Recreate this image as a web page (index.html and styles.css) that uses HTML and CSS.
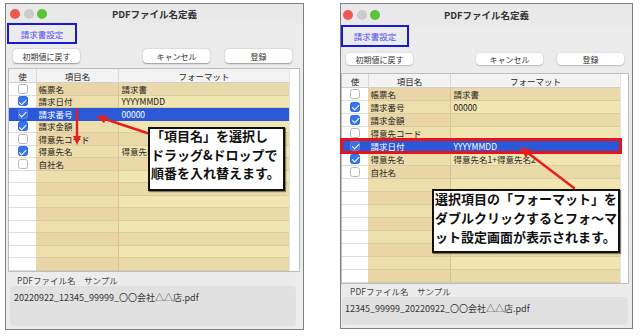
FILE: index.html
```html
<!DOCTYPE html>
<html lang="ja">
<head>
<meta charset="utf-8">
<title>PDFファイル名定義</title>
<link rel="stylesheet" href="styles.css">
</head>
<body>
<div class="stage">
  <div class="win win-a">
    <div class="titlebar">
      <div class="lights"><span class="dot red"></span><span class="dot gray"></span><span class="dot green"></span></div>
      <div class="title">PDFファイル名定義</div>
      <div></div>
    </div>
    <div class="tab">請求書設定</div>
    <div class="btnrow">
      <div class="btn">初期値に戻す</div>
      <div class="btngroup"><div class="btn">キャンセル</div><div class="btn">登録</div></div>
    </div>
    <div class="table">
      <div class="grid">
        <div class="row head"><div class="c use">使</div><div class="c name">項目名</div><div class="c fmt">フォーマット</div></div>
        <div class="row d"><div class="c use"><span class="cb"></span></div><div class="c name">帳票名</div><div class="c fmt">請求書</div></div>
        <div class="row d"><div class="c use"><span class="cb on"></span></div><div class="c name">請求日付</div><div class="c fmt">YYYYMMDD</div></div>
        <div class="row d sel"><div class="c use"><span class="cb on"></span></div><div class="c name">請求番号</div><div class="c fmt">00000</div></div>
        <div class="row d"><div class="c use"><span class="cb on"></span></div><div class="c name">請求金額</div><div class="c fmt"></div></div>
        <div class="row d"><div class="c use"><span class="cb"></span></div><div class="c name">得意先コード</div><div class="c fmt"></div></div>
        <div class="row d"><div class="c use"><span class="cb on"></span></div><div class="c name">得意先名</div><div class="c fmt">得意先名1+得意先名2</div></div>
        <div class="row d"><div class="c use"><span class="cb"></span></div><div class="c name">自社名</div><div class="c fmt"></div></div>
        <div class="row d"><div class="c use"></div><div class="c name"></div><div class="c fmt"></div></div>
        <div class="row d"><div class="c use"></div><div class="c name"></div><div class="c fmt"></div></div>
        <div class="row d"><div class="c use"></div><div class="c name"></div><div class="c fmt"></div></div>
        <div class="row d"><div class="c use"></div><div class="c name"></div><div class="c fmt"></div></div>
        <div class="row d"><div class="c use"></div><div class="c name"></div><div class="c fmt"></div></div>
        <div class="row d"><div class="c use"></div><div class="c name"></div><div class="c fmt"></div></div>
        <div class="row d"><div class="c use"></div><div class="c name"></div><div class="c fmt"></div></div>
        <div class="row d"><div class="c use"></div><div class="c name"></div><div class="c fmt"></div></div>
      </div>
      <div class="gutter"></div>
    </div>
    <div class="label">PDFファイル名　サンプル</div>
    <div class="sample">20220922_12345_99999_〇〇会社△△店.pdf</div>
  </div>

  <div class="win win-b">
    <div class="titlebar">
      <div class="lights"><span class="dot red"></span><span class="dot gray"></span><span class="dot green"></span></div>
      <div class="title">PDFファイル名定義</div>
      <div></div>
    </div>
    <div class="tab">請求書設定</div>
    <div class="btnrow">
      <div class="btn">初期値に戻す</div>
      <div class="btngroup"><div class="btn">キャンセル</div><div class="btn">登録</div></div>
    </div>
    <div class="table">
      <div class="grid">
        <div class="row head"><div class="c use">使</div><div class="c name">項目名</div><div class="c fmt">フォーマット</div></div>
        <div class="row d"><div class="c use"><span class="cb"></span></div><div class="c name">帳票名</div><div class="c fmt">請求書</div></div>
        <div class="row d"><div class="c use"><span class="cb on"></span></div><div class="c name">請求番号</div><div class="c fmt">00000</div></div>
        <div class="row d"><div class="c use"><span class="cb on"></span></div><div class="c name">請求金額</div><div class="c fmt"></div></div>
        <div class="row d"><div class="c use"><span class="cb"></span></div><div class="c name">得意先コード</div><div class="c fmt"></div></div>
        <div class="row d sel"><div class="c use"><span class="cb on"></span></div><div class="c name">請求日付</div><div class="c fmt">YYYYMMDD</div></div>
        <div class="row d"><div class="c use"><span class="cb on"></span></div><div class="c name">得意先名</div><div class="c fmt">得意先名1+得意先名2</div></div>
        <div class="row d"><div class="c use"><span class="cb"></span></div><div class="c name">自社名</div><div class="c fmt"></div></div>
        <div class="row d"><div class="c use"></div><div class="c name"></div><div class="c fmt"></div></div>
        <div class="row d"><div class="c use"></div><div class="c name"></div><div class="c fmt"></div></div>
        <div class="row d"><div class="c use"></div><div class="c name"></div><div class="c fmt"></div></div>
        <div class="row d"><div class="c use"></div><div class="c name"></div><div class="c fmt"></div></div>
        <div class="row d"><div class="c use"></div><div class="c name"></div><div class="c fmt"></div></div>
        <div class="row d"><div class="c use"></div><div class="c name"></div><div class="c fmt"></div></div>
        <div class="row d"><div class="c use"></div><div class="c name"></div><div class="c fmt"></div></div>
        <div class="row d"><div class="c use"></div><div class="c name"></div><div class="c fmt"></div></div>
      </div>
      <div class="gutter"></div>
    </div>
    <div class="label">PDFファイル名　サンプル</div>
    <div class="sample">12345_99999_20220922_〇〇会社△△店.pdf</div>
  </div>

  <div class="redbox"></div>
  <svg class="arrows" width="640" height="336" viewBox="0 0 640 336">
    <g stroke="#e61e1e" stroke-width="2.4" fill="none" stroke-linecap="round">
      <line x1="77" y1="110" x2="77" y2="137"/>
      <line x1="147" y1="133" x2="105" y2="119"/>
      <line x1="574" y1="188" x2="528" y2="153"/>
    </g>
    <g fill="#e61e1e">
      <polygon points="73,136 81,136 77,145"/>
      <polygon points="96,116 104.2,123.3 106.8,115.3"/>
      <polygon points="520,147 525.6,157.6 531.6,150"/>
    </g>
  </svg>
  <div class="callout callout-a"><p class="ctext">「項目名」を選択し<br>ドラッグ&amp;ドロップで<br>順番を入れ替えます。</p></div>
  <div class="callout callout-b"><p class="ctext">選択項目の「フォーマット」を<br>ダブルクリックするとフォ〜マ<br>ット設定画面が表示されます。</p></div>
</div>
</body>
</html>
```

FILE: styles.css
```css
body {
  margin: 0;
  background: #fff;
  font-family: "Noto Sans CJK JP", "Noto Sans", sans-serif;
}

.stage {
  position: relative;
  width: 640px;
  height: 336px;
  box-sizing: border-box;
  padding: 3px 0 0 5px;
  display: flex;
  align-items: flex-start;
  gap: 36px;
}

.win {
  box-sizing: border-box;
  border: 1px solid #7f7f7f;
  background: #ececec;
  display: flex;
  flex-direction: column;
}

.win-a {
  width: 299px;
  height: 327px;
  --rh: 12.5px;
  --cu: 27px;
}

.win-b {
  width: 293px;
  height: 326px;
  --rh: 13px;
  --cu: 26px;
}

/* title bar */
.titlebar {
  display: grid;
  grid-template-columns: 1fr auto 1fr;
  align-items: center;
  background: #e9e9e9;
}
.win-a .titlebar { height: 19px; }
.win-b .titlebar { height: 21px; }

.lights {
  display: flex;
  gap: 3.5px;
}
.win-a .lights { padding-left: 4px; }
.win-b .lights { padding-left: 2px; }

.dot {
  width: 10px;
  height: 10px;
  border-radius: 50%;
}
.red { background: #ee5a52; }
.gray { background: #cbcbcb; }
.green { background: #5cc23c; }

.title {
  font-size: 9.5px;
  font-weight: 700;
  color: #333;
}

/* tab box */
.tab {
  box-sizing: border-box;
  border: 2px solid #1a1ad4;
  color: #5050ee;
  font-size: 8.5px;
  display: flex;
  align-items: center;
  justify-content: center;
}
.win-a .tab { margin-left: 1px; width: 70px; height: 21px; }
.win-b .tab { width: 68px; height: 22px; }

/* buttons */
.btnrow {
  display: flex;
  justify-content: space-between;
}
.btngroup { display: flex; }
.win-a .btnrow { margin-top: 5px; height: 14px; padding: 0 11px 0 7px; }
.win-a .btngroup { gap: 15px; }
.win-b .btnrow { margin-top: 6px; height: 12px; padding: 0 8px 0 5px; }
.win-b .btngroup { gap: 14px; }

.btn {
  box-sizing: border-box;
  width: 67px;
  background: #fff;
  border-radius: 4px;
  box-shadow: 0 0.5px 1.5px rgba(0, 0, 0, 0.35);
  font-size: 8px;
  color: #333;
  display: flex;
  align-items: center;
  justify-content: center;
}

/* table */
.table {
  display: flex;
  border: 1px solid #bdbdbd;
  background: #fff;
}
.win-a .table { margin: 5px 3px 0 2px; }
.win-b .table { margin: 8px 3px 0 0; }

.grid {
  flex: 1;
  display: flex;
  flex-direction: column;
}
.gutter {
  background: #fff;
  border-left: 1px solid #e2e2e2;
}
.win-a .gutter { width: 9px; }
.win-b .gutter { width: 7px; }

.row {
  display: flex;
  height: var(--rh);
  font-size: 8.5px;
  color: #222;
}
.c {
  box-sizing: border-box;
  height: 100%;
  display: flex;
  align-items: center;
  white-space: nowrap;
  overflow: hidden;
}
.use {
  width: var(--cu);
  justify-content: center;
}
.name {
  width: 82px;
  padding-left: 2.5px;
}
.fmt {
  flex: 1;
  padding-left: 2.5px;
}

.head {
  height: 14px;
  background: #f3f3f3;
}
.head .c {
  border-bottom: 1px solid #cfcfcf;
  justify-content: center;
  padding: 0;
}
.head .name,
.head .fmt { border-left: 1px solid #dadada; }

.d .use {
  background: #fff;
  border-bottom: 1px solid #dedede;
}
.d .name,
.d .fmt { border-bottom: 1px solid #d8cda2; }
.d .fmt { border-left: 1px solid #d3c395; }

.d:nth-child(even) .name { background: #e9d5a5; }
.d:nth-child(even) .fmt { background: #ebdaa9; }
.d:nth-child(odd) .name { background: #eedeab; }
.d:nth-child(odd) .fmt { background: #f1e5b2; }

.d.sel .c {
  background: #2a58d6;
  color: #fff;
  border-bottom-color: #2a58d6;
  border-left-color: #2a58d6;
}

/* checkboxes */
.cb {
  position: relative;
  width: 10px;
  height: 10px;
  box-sizing: border-box;
  border-radius: 2.5px;
  border: 1px solid #b7b7b7;
  background: #fff;
}
.cb.on {
  background: #3577ee;
  border-color: #2d66d8;
}
.cb.on::after {
  content: "";
  position: absolute;
  left: 2.6px;
  top: 0.3px;
  width: 2.5px;
  height: 5.5px;
  border: solid #fff;
  border-width: 0 1.6px 1.6px 0;
  transform: rotate(45deg);
}
.sel .cb.on {
  background: #3a6fe6;
  border-color: #5a86ea;
}

/* sample */
.label {
  font-size: 8.5px;
  color: #444;
  height: 10px;
  line-height: 10px;
}
.win-a .label { margin-top: 3px; padding-left: 11px; }
.win-b .label { margin-top: 2px; padding-left: 9px; }

.sample {
  box-sizing: border-box;
  background: #e1e1e1;
  border-radius: 4px;
  font-size: 9px;
  line-height: 13px;
  color: #333;
  white-space: nowrap;
}
.win-a .sample { margin: 1px 7px 0 4px; height: 40px; padding: 5px 4px; }
.win-b .sample { margin: 1px 4px 0 1px; height: 28px; padding: 5px 3px; }

/* overlays */
.redbox {
  position: absolute;
  left: 340px;
  top: 138px;
  width: 282px;
  height: 16px;
  box-sizing: border-box;
  border: 3px solid #e8141a;
}

.arrows {
  position: absolute;
  left: 0;
  top: 0;
}

.callout {
  position: absolute;
  box-sizing: border-box;
  background: #fff;
  border: 2px solid #111;
  box-shadow: 1px 1px 1px rgba(0, 0, 0, 0.45);
  font-size: 13px;
  font-weight: 700;
  color: #111;
  white-space: nowrap;
  padding: 0 0 0 1px;
}
.ctext {
  margin: -2px 0 0;
}
.callout-a {
  left: 148px;
  top: 127px;
  width: 137px;
  height: 64px;
  line-height: 18.5px;
}
.callout-b {
  left: 432px;
  top: 189px;
  width: 188px;
  height: 64px;
  line-height: 19px;
}
```
